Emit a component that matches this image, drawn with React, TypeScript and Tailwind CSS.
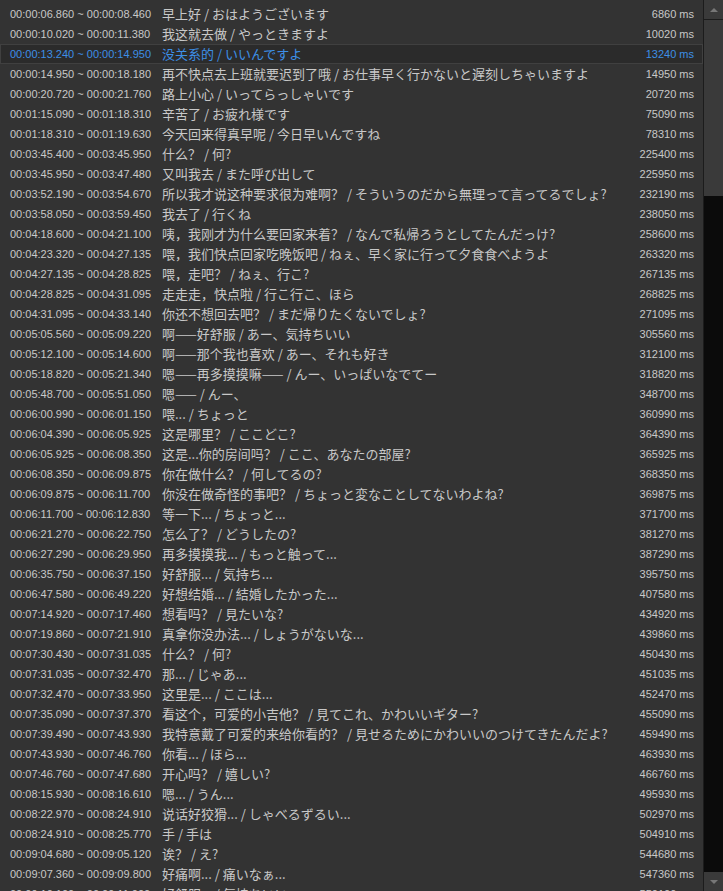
const rows: [string, string, string, number][] = [
  ["00:00:06.860", "00:00:08.460", "早上好 / おはようございます", 6860],
  ["00:00:10.020", "00:00:11.380", "我这就去做 / やっときますよ", 10020],
  ["00:00:13.240", "00:00:14.950", "没关系的 / いいんですよ", 13240],
  ["00:00:14.950", "00:00:18.180", "再不快点去上班就要迟到了哦 / お仕事早く行かないと遅刻しちゃいますよ", 14950],
  ["00:00:20.720", "00:00:21.760", "路上小心 / いってらっしゃいです", 20720],
  ["00:01:15.090", "00:01:18.310", "辛苦了 / お疲れ様です", 75090],
  ["00:01:18.310", "00:01:19.630", "今天回来得真早呢 / 今日早いんですね", 78310],
  ["00:03:45.400", "00:03:45.950", "什么？ / 何?", 225400],
  ["00:03:45.950", "00:03:47.480", "又叫我去 / また呼び出して", 225950],
  ["00:03:52.190", "00:03:54.670", "所以我才说这种要求很为难啊？ / そういうのだから無理って言ってるでしょ?", 232190],
  ["00:03:58.050", "00:03:59.450", "我去了 / 行くね", 238050],
  ["00:04:18.600", "00:04:21.100", "咦，我刚才为什么要回家来着？ / なんで私帰ろうとしてたんだっけ?", 258600],
  ["00:04:23.320", "00:04:27.135", "喂，我们快点回家吃晚饭吧 / ねぇ、早く家に行って夕食食べようよ", 263320],
  ["00:04:27.135", "00:04:28.825", "喂，走吧？ / ねぇ、行こ?", 267135],
  ["00:04:28.825", "00:04:31.095", "走走走，快点啦 / 行こ行こ、ほら", 268825],
  ["00:04:31.095", "00:04:33.140", "你还不想回去吧？ / まだ帰りたくないでしょ?", 271095],
  ["00:05:05.560", "00:05:09.220", "啊——好舒服 / あー、気持ちいい", 305560],
  ["00:05:12.100", "00:05:14.600", "啊——那个我也喜欢 / あー、それも好き", 312100],
  ["00:05:18.820", "00:05:21.340", "嗯——再多摸摸嘛—— / んー、いっぱいなでてー", 318820],
  ["00:05:48.700", "00:05:51.050", "嗯—— / んー、", 348700],
  ["00:06:00.990", "00:06:01.150", "喂... / ちょっと", 360990],
  ["00:06:04.390", "00:06:05.925", "这是哪里？ / ここどこ?", 364390],
  ["00:06:05.925", "00:06:08.350", "这是...你的房间吗？ / ここ、あなたの部屋?", 365925],
  ["00:06:08.350", "00:06:09.875", "你在做什么？ / 何してるの?", 368350],
  ["00:06:09.875", "00:06:11.700", "你没在做奇怪的事吧？ / ちょっと変なことしてないわよね?", 369875],
  ["00:06:11.700", "00:06:12.830", "等一下... / ちょっと...", 371700],
  ["00:06:21.270", "00:06:22.750", "怎么了？ / どうしたの?", 381270],
  ["00:06:27.290", "00:06:29.950", "再多摸摸我... / もっと触って...", 387290],
  ["00:06:35.750", "00:06:37.150", "好舒服... / 気持ち...", 395750],
  ["00:06:47.580", "00:06:49.220", "好想结婚... / 結婚したかった...", 407580],
  ["00:07:14.920", "00:07:17.460", "想看吗？ / 見たいな?", 434920],
  ["00:07:19.860", "00:07:21.910", "真拿你没办法... / しょうがないな...", 439860],
  ["00:07:30.430", "00:07:31.035", "什么？ / 何?", 450430],
  ["00:07:31.035", "00:07:32.470", "那... / じゃあ...", 451035],
  ["00:07:32.470", "00:07:33.950", "这里是... / ここは...", 452470],
  ["00:07:35.090", "00:07:37.370", "看这个，可爱的小吉他？ / 見てこれ、かわいいギター?", 455090],
  ["00:07:39.490", "00:07:43.930", "我特意戴了可爱的来给你看的？ / 見せるためにかわいいのつけてきたんだよ?", 459490],
  ["00:07:43.930", "00:07:46.760", "你看... / ほら...", 463930],
  ["00:07:46.760", "00:07:47.680", "开心吗？ / 嬉しい?", 466760],
  ["00:08:15.930", "00:08:16.610", "嗯... / うん...", 495930],
  ["00:08:22.970", "00:08:24.910", "说话好狡猾... / しゃべるずるい...", 502970],
  ["00:08:24.910", "00:08:25.770", "手 / 手は", 504910],
  ["00:09:04.680", "00:09:05.120", "诶？ / え?", 544680],
  ["00:09:07.360", "00:09:09.800", "好痛啊... / 痛いなぁ...", 547360],
  ["00:09:10.100", "00:09:11.000", "好舒服... / 気持ちいい...", 550100],
];

const SELECTED = 2;

export default function App() {
  return (
    <div className="flex h-[891px] w-[723px] overflow-hidden bg-[#333333]">
      {/* subtitle list */}
      <div className="flex-1 overflow-hidden pt-1">
        {rows.map(([start, end, text, ms], i) => {
          const sel = i === SELECTED;
          return (
            <div
              key={i}
              className={
                sel
                  ? "flex h-5 items-center border border-[#404040] bg-[#2b2b2b] text-[#3d8fe6]"
                  : "flex h-5 items-center border border-transparent text-[#c8c8c8]"
              }
            >
              <span className="w-[161px] shrink-0 whitespace-nowrap pl-[9px] font-['Liberation_Sans',sans-serif] text-[11px]">
                {start} ~ {end}
              </span>
              <span className="flex-1 whitespace-nowrap font-['Noto_Sans_CJK_SC',sans-serif] text-[13px] leading-5">
                {text}
              </span>
              <span className="whitespace-nowrap pr-2 text-right font-['Liberation_Sans',sans-serif] text-[11px]">
                {ms} ms
              </span>
            </div>
          );
        })}
      </div>

      {/* scrollbar */}
      <div className="flex w-5 shrink-0 flex-col border-l border-[#1c1c1c] bg-[#3a3a3a]">
        <div className="flex h-5 items-center justify-center border-b border-[#1c1c1c]">
          <svg width="8" height="4" viewBox="0 0 8 4">
            <path d="M0 4 L4 0 L8 4 Z" fill="#777777" />
          </svg>
        </div>
        <div className="h-[176px] bg-[#3a3a3a]" />
        <div className="flex-1 bg-[#0b0b0b]" />
        <div className="flex h-[19px] items-center justify-center">
          <svg width="8" height="4" viewBox="0 0 8 4">
            <path d="M0 0 L4 4 L8 0 Z" fill="#777777" />
          </svg>
        </div>
      </div>
    </div>
  );
}
